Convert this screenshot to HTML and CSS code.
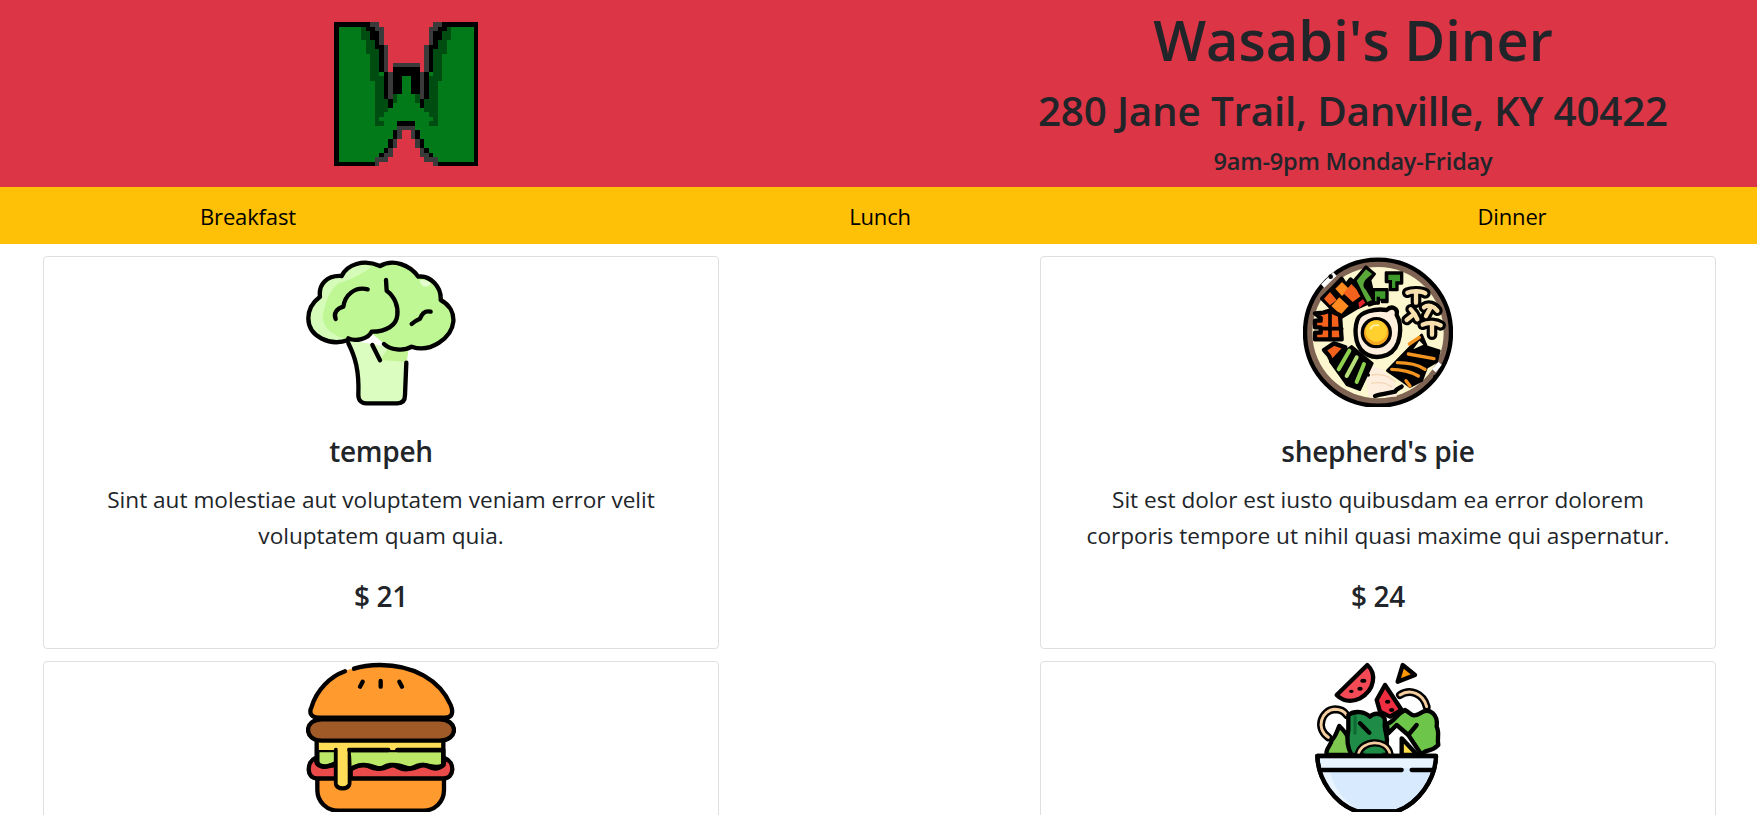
FILE: index.html
```html
<!DOCTYPE html>
<html lang="en">
<head>
<meta charset="utf-8">
<title>Wasabi's Diner</title>
<link rel="stylesheet" href="styles.css">
</head>
<body>
<header class="hero">
  <div class="logo-col">
    <svg class="logo" viewBox="0 0 32 32" shape-rendering="crispEdges" aria-label="W logo">
      <rect width="32" height="32" fill="#000"/>
      <rect x="1" y="1" width="30" height="30" fill="#027a1a"/>
      <defs>
        <g id="half">
          <path fill="#004d12" d="M6 1V4H7V7H8V13H9V23H11V22H12V21H13V20H14V18H15V12H10V1Z"/>
          <path fill="#000" d="M7 0V2H8V4H9V6H10V11H11V17H12V20H14V18H13V11H16V0Z"/>
          <path fill="#000" d="M13 11H15V17H14V16H13Z"/>
          <path fill="#3a3a3a" d="M8 0V1H9V2H10V5H11V11H12V17H13V9H16V0Z"/>
          <path fill="#000" d="M13 11H14V10H16V12H15V16H13Z"/>
          <path fill="#000" d="M7 32V31H9V30H10V29H11V28H12V26H13V24H14V22H16V32Z"/>
          <path fill="#3a3a3a" d="M9 32V30H11V29H12V28H13V26H14V24H16V23H16V32Z"/>
          <path fill="#000" d="M14 22H16V23H14Z"/>
        </g>
      </defs>
      <use href="#half"/>
      <use href="#half" transform="matrix(-1 0 0 1 32 0)"/>
      <path fill="#dc3545" d="M10 0V1H11V5H12V11H13V9H19V11H20V5H21V1H22V0Z"/>
      <path fill="#3a3a3a" d="M13 9H19V10H13Z"/>
      <path fill="#000" d="M14 10H18V11H14Z"/>
      <path fill="#027a1a" d="M15 12H17V16H18V18H19V19H20V20H21V21H22V22H10V21H11V20H12V19H13V18H14V16H15Z"/>
      <path fill="#027a1a" d="M11 22H21V22.9H11Z"/>
      <path fill="#000" d="M14 22H18V23H14Z"/>
      <path fill="#3a3a3a" d="M14 23H18V24H14Z"/>
      <path fill="#dc3545" d="M10 32V31H12V30H13V28H14V26H15V24H17V26H18V28H19V30H20V31H22V32Z"/>
    </svg>
  </div>
  <div class="info-col">
    <h1 class="name">Wasabi's Diner</h1>
    <h2 class="address">280 Jane Trail, Danville, KY 40422</h2>
    <h4 class="hours">9am-9pm Monday-Friday</h4>
  </div>
</header>

<nav class="menu-bar">
  <a class="menu-link">Breakfast</a>
  <a class="menu-link">Lunch</a>
  <a class="menu-link">Dinner</a>
</nav>

<main class="grid">
  <article class="card">
    <svg class="food" viewBox="78 21 450 450" fill="none" stroke="#000" stroke-width="13" stroke-linecap="round" stroke-linejoin="round">
      <path fill="#dcfdc0" stroke="none" d="M205 270C228 320 240 370 235 440C235 455 245 460 258 460H352C368 460 375 450 375 435L382 300Z"/>
      <path fill="#c3f594" stroke="none" d="M335 280L385 305L380 335L300 330Z"/>
      <path fill="#bff795" stroke="none" d="M205 270C150 290 85 260 85 205C85 175 100 155 120 140C115 105 140 75 185 78C200 45 250 25 300 48C340 25 390 45 415 80C450 75 485 110 482 150C510 165 522 190 520 215C515 265 450 310 395 290C370 305 330 300 310 280L275 250C262 268 225 275 205 270Z"/>
      <path fill="#d6fcba" stroke="none" d="M205 270C150 290 85 260 85 205C85 175 100 155 120 140C115 105 140 75 185 78C200 50 240 35 275 50C250 70 210 90 175 100C140 130 135 170 128 200C130 240 170 260 205 270Z"/>
      <path fill="#e4fdd0" stroke="none" d="M420 90C440 90 455 95 450 105C440 115 420 110 420 90Z"/>
      <path d="M205 270C150 290 85 260 85 205C85 175 100 155 120 140C115 105 140 75 185 78C200 45 250 25 300 48C340 25 390 45 415 80C450 75 485 110 482 150C510 165 522 190 520 215C515 265 450 310 395 290C370 305 330 300 312 282"/>
      <path d="M205 280C225 320 238 360 235 435C235 452 245 460 258 460H352C368 460 375 450 375 435L379 338"/>
      <path d="M318 90L320 122C345 140 355 170 352 195C350 225 320 245 275 245C265 268 225 275 205 265"/>
      <path d="M277 285L300 331"/>
      <path d="M263 118C225 108 195 135 190 170C170 175 160 190 167 207"/>
      <path d="M452 185C432 180 425 195 420 206C410 210 402 215 395 222"/>
    </svg>
    <div class="card-body">
      <h5 class="dish">tempeh</h5>
      <p class="desc">Sint aut molestiae aut voluptatem veniam error velit voluptatem quam quia.</p>
      <h5 class="price">$ 21</h5>
    </div>
  </article>

  <article class="card">
    <svg class="food" viewBox="69 21 450 450" fill="none" stroke="#000" stroke-width="13" stroke-linecap="round" stroke-linejoin="round">
      <circle cx="294" cy="248" r="219" fill="#7f6353"/>
      <circle cx="294" cy="248" r="197" fill="#fdf7cf" stroke="none"/>
      <path fill="#fdeedd" stroke="none" d="M255 350C300 340 350 380 350 440H265Z"/>
      <path stroke="#fff" stroke-width="14" stroke-linecap="butt" d="M128 108L165 72M462 362L480 340"/>
      <circle cx="152" cy="80" r="7" fill="#000" stroke="none"/>
      <circle cx="466" cy="381" r="7" fill="#000" stroke="none"/>
      <path fill="#000" stroke-width="12" d="M126 146L185 86L198 106L212 88L278 152L232 172L182 202Z"/>
      <g fill="#ff8a1f" stroke="none">
        <path d="M186 96L208 118L186 138L166 116Z"/>
        <path d="M214 102L246 136L218 156L190 130Z" fill="#f4611c"/>
        <path d="M178 142L206 168L182 194L154 168Z"/>
        <path d="M150 126L170 150L150 166L132 146Z" fill="#f4611c"/>
      </g>
      <path fill="#e2242c" stroke="none" d="M235 158L250 146L256 158L238 174Z"/>
      <path fill="#f4611c" d="M105 190L130 188L150 182L180 196L185 268H105V248H122V232H105V212H122V204Z"/>
      <path stroke-width="11" d="M122 236H185M150 188V268"/>
      <path fill="#f4611c" d="M132 300L162 280L196 292L156 336L146 316Z"/>
      <path fill="#000" stroke-width="8" d="M222 92L258 50L284 72L270 90L286 160L268 166L240 130Z"/>
      <path fill="#5aa83a" stroke="none" d="M230 92L258 58L276 72L258 88C248 100 248 112 258 120L276 150L262 156C248 130 240 110 230 92Z"/>
      <path fill="#000" stroke-width="8" d="M278 118H322V156H306V148H296V160H280Z"/>
      <path fill="#3f9a2c" stroke="none" d="M285 124H316V146H300V140H290V154H285Z"/>
      <path fill="#000" stroke-width="8" d="M318 68H366V100H352V120H330V96H318Z"/>
      <path fill="#3f9a2c" stroke="none" d="M325 74H360V94H346V114H336V90H325Z"/>
      <g stroke="#000" stroke-width="32">
        <path d="M382 128C395 122 425 122 436 130M408 130V158"/>
        <path d="M432 172C445 162 462 168 472 182M452 172L438 198"/>
        <path d="M428 224C445 215 470 218 482 226M456 226V254"/>
        <path d="M392 178C400 186 408 198 412 208M400 194L380 210"/>
      </g>
      <g stroke="#f7dfae" stroke-width="13">
        <path d="M382 128C395 122 425 122 436 130M408 130V158"/>
        <path d="M432 172C445 162 462 168 472 182M452 172L438 198"/>
        <path d="M428 224C445 215 470 218 482 226M456 226V254"/>
        <path d="M392 178C400 186 408 198 412 208M400 194L380 210"/>
      </g>
      <path fill="#fdeedd" d="M232 210C240 185 285 175 320 180C335 165 355 175 350 195C368 225 365 295 322 314C280 332 240 312 230 272C225 250 225 230 232 210Z"/>
      <circle cx="289" cy="248" r="42" fill="#f7a823" stroke-width="10"/>
      <circle cx="289" cy="243" r="32" fill="#ffd02e" stroke="none"/>
      <path stroke="#fff2a8" stroke-width="6" d="M272 236C275 228 285 224 295 226"/>
      <path fill="#000" stroke-width="6" d="M150 335L215 288L278 340L240 420L200 405Z"/>
      <g stroke-width="12">
        <path stroke="#8fd14f" d="M208 302L176 358"/>
        <path stroke="#b6e07a" d="M230 322L200 378"/>
        <path stroke="#8fd14f" d="M252 342L230 396"/>
      </g>
      <path fill="#000" stroke-width="8" d="M322 362L392 290L425 255L440 290L478 302L470 335L440 352L425 392L390 410L370 395Z"/>
      <path fill="#fdf7cf" stroke="none" d="M418 272L430 284L400 298Z"/>
      <g stroke="#f2941f" stroke-width="10">
        <path d="M335 358C360 358 395 365 415 378"/>
        <path d="M352 338C380 338 415 345 435 358"/>
        <path d="M385 312L462 326"/>
        <path d="M378 392L390 408"/>
        <path d="M418 262L388 282"/>
      </g>
      <circle cx="265" cy="375" r="5" fill="#000" stroke="none"/>
      <path stroke="#f3d8b8" stroke-width="4" d="M275 375C300 370 330 378 345 395M275 400C295 395 320 398 335 410"/>
      <path d="M285 438C305 432 325 430 345 425C350 415 360 414 365 410"/>
    </svg>
    <div class="card-body">
      <h5 class="dish">shepherd's pie</h5>
      <p class="desc">Sit est dolor est iusto quibusdam ea error dolorem corporis tempore ut nihil quasi maxime qui aspernatur.</p>
      <h5 class="price">$ 24</h5>
    </div>
  </article>

  <article class="card">
    <svg class="food" viewBox="78 36 450 450" fill="none" stroke="#000" stroke-width="13" stroke-linecap="round" stroke-linejoin="round">
      <path fill="#ff9a2e" stroke="none" d="M100 200C85 190 90 170 100 150C130 85 200 45 300 45C400 45 480 90 510 165C518 185 515 200 500 203Z"/>
      <path fill="#ff9a2e" d="M112 385V420C112 455 140 482 175 482H430C465 482 492 455 492 420V385Z"/>
      <path fill="#bbe866" d="M112 300H490V355H112Z"/>
      <path fill="#ffdd57" stroke="none" d="M115 275H490V295H350L345 300H205V400C205 412 170 412 170 400V300H115Z"/>
      <path fill="#e94a4a" d="M105 325C80 335 78 385 110 385H490C525 385 525 335 495 325L490 345C470 360 450 345 430 345C415 345 405 360 385 355C370 350 355 345 340 345C325 345 315 360 295 355C280 350 265 345 250 345C235 345 225 350 212 358V385H170V345C150 345 135 355 115 345Z"/>
      <path fill="#ffdd57" d="M168 300V400C168 420 208 420 208 400V345C208 325 205 300 205 300"/>
      <path fill="#ffdd57" stroke="none" d="M173 280H203V400C203 410 173 410 173 400Z"/>
      <path d="M110 275V340M490 275V340"/>
      <path d="M208 300H325M352 300H487"/>
      <path d="M215 355C235 345 250 342 265 348C280 356 295 360 310 352C325 342 340 342 355 352C370 360 385 360 400 352C415 344 430 342 445 350C460 358 475 358 490 345"/>
      <path d="M115 342C125 355 140 352 165 340"/>
      <path fill="#a05a28" d="M125 208H480C505 208 522 222 522 240C522 258 505 272 480 272H125C100 272 84 258 84 240C84 222 100 208 125 208Z"/>
      <path d="M195 64C150 80 110 120 95 170C85 190 95 203 115 203H495C515 203 522 190 512 165C480 90 400 45 300 45C270 45 245 48 222 56"/>
      <path stroke-width="13" d="M248 95L240 110M302 93V110M358 95L366 110"/>
    </svg>
  </article>

  <article class="card">
    <svg class="food" viewBox="69 36 450 450" fill="none" stroke="#000" stroke-width="13" stroke-linecap="round" stroke-linejoin="round">
      <path fill="#f44a56" d="M262 45C290 70 285 120 240 145C210 160 185 150 170 135Z"/>
      <g fill="#000" stroke="none"><ellipse cx="250" cy="92" rx="9" ry="6"/><ellipse cx="240" cy="116" rx="8" ry="6"/><ellipse cx="214" cy="124" rx="7" ry="5"/></g>
      <path fill="#ff9800" d="M368 45L405 75L353 95Z"/>
      <path fill="none" stroke="#000" stroke-width="24" d="M360 135C390 115 430 130 440 170"/>
      <path fill="none" stroke="#f6cfa0" stroke-width="9" d="M360 135C390 115 430 130 440 170"/>
      <path fill="#ee2d40" d="M315 105L365 180L330 200L300 185L290 150Z"/>
      <g fill="#000" stroke="none"><ellipse cx="323" cy="155" rx="8" ry="6"/><ellipse cx="335" cy="180" rx="8" ry="6"/></g>
      <path fill="none" stroke="#000" stroke-width="24" d="M145 262C105 235 125 180 165 178C185 178 195 188 200 195"/>
      <path fill="none" stroke="#f6cfa0" stroke-width="9" d="M145 262C105 235 125 180 165 178C185 178 195 188 200 195"/>
      <path fill="#7ec850" d="M178 228C190 240 200 250 205 265L215 315H140C135 295 155 285 155 270C165 265 170 245 178 228Z"/>
      <path fill="#ffdc4a" d="M365 265L412 315H365Z"/>
      <path fill="#6dc64a" d="M320 222C345 215 345 195 375 180C395 190 395 205 420 190C450 170 475 195 470 230C480 250 470 265 475 285C450 310 435 295 425 315L385 255L350 225L325 250Z"/>
      <path d="M410 225L385 255"/>
      <path fill="#1e8c46" d="M205 195C225 180 255 185 270 200C285 185 315 190 315 215C310 240 325 255 320 280L325 315H215C200 290 200 265 205 240Z"/>
      <path stroke="#0f6c35" stroke-width="10" d="M225 200V250"/>
      <path d="M240 220L268 248"/>
      <path fill="#1e8c46" stroke="none" d="M250 315C255 300 300 295 312 315Z"/>
      <path stroke="#000" stroke-width="22" d="M235 312C245 270 320 265 330 312"/>
      <path stroke="#f6cfa0" stroke-width="8" d="M235 312C245 270 320 265 330 312"/>
      <path fill="#d8eafd" d="M112 318H468C466 390 415 460 350 484H230C165 460 114 390 112 318Z"/>
      <path fill="#e8f4ff" stroke="none" d="M120 325H462L458 355H124Z"/>
      <path fill="#e8f4ff" stroke="none" d="M124 365H150C160 410 190 450 230 478C170 450 130 410 124 365Z"/>
      <path d="M112 318H468C466 390 415 460 350 484H230C165 460 114 390 112 318Z"/>
      <path d="M125 360H365M395 360H458"/>
    </svg>
  </article>
</main>
</body>
</html>
```

FILE: styles.css
```css
* { box-sizing: border-box; }
html, body { height: 100%; margin: 0; overflow: hidden; }
body {
  font-family: "Open Sans", "Noto Sans", "Liberation Sans", sans-serif;
  color: #212529;
  background: #fff;
}
.hero {
  display: flex;
  height: 187px;
  background: #dc3545;
}
.logo-col {
  width: 949px;
  padding: 22px 0 0 334px;
}
.logo { display: block; width: 144px; height: 144px; }
.info-col {
  flex: 1;
  text-align: center;
  font-weight: 600;
}
.name, .address, .hours { margin: 0; font-weight: 600; }
.name { font-size: 56px; line-height: 78px; margin-bottom: 2px; }
.address { font-size: 40.4px; line-height: 62px; letter-spacing: -0.2px; }
.hours { font-size: 23.5px; line-height: 38px; letter-spacing: -0.2px; }
.menu-bar {
  display: grid;
  grid-template-columns: 96px 1fr 96px;
  align-items: center;
  height: 57px;
  padding: 0 197px 0 200px;
  background: #ffc107;
  text-align: center;
}
.menu-link { color: #000; font-size: 22px; letter-spacing: -0.15px; }
.grid {
  display: grid;
  grid-template-columns: 676px 676px;
  justify-content: space-between;
  row-gap: 12px;
  padding: 12px 41px 0 43px;
}
.card {
  border: 1px solid #dfdfdf;
  border-radius: 4px;
  height: 393px;
  text-align: center;
  background: #fff;
}
.food { display: block; width: 150px; height: 150px; margin: 0 auto; }
.card-body { padding: 25px 40px 0; }
.dish, .price { margin: 0; font-size: 28px; font-weight: 600; line-height: 38px; letter-spacing: -0.3px; }
.desc { margin: 12px 0 23px; font-size: 22.6px; line-height: 36px; }
```
